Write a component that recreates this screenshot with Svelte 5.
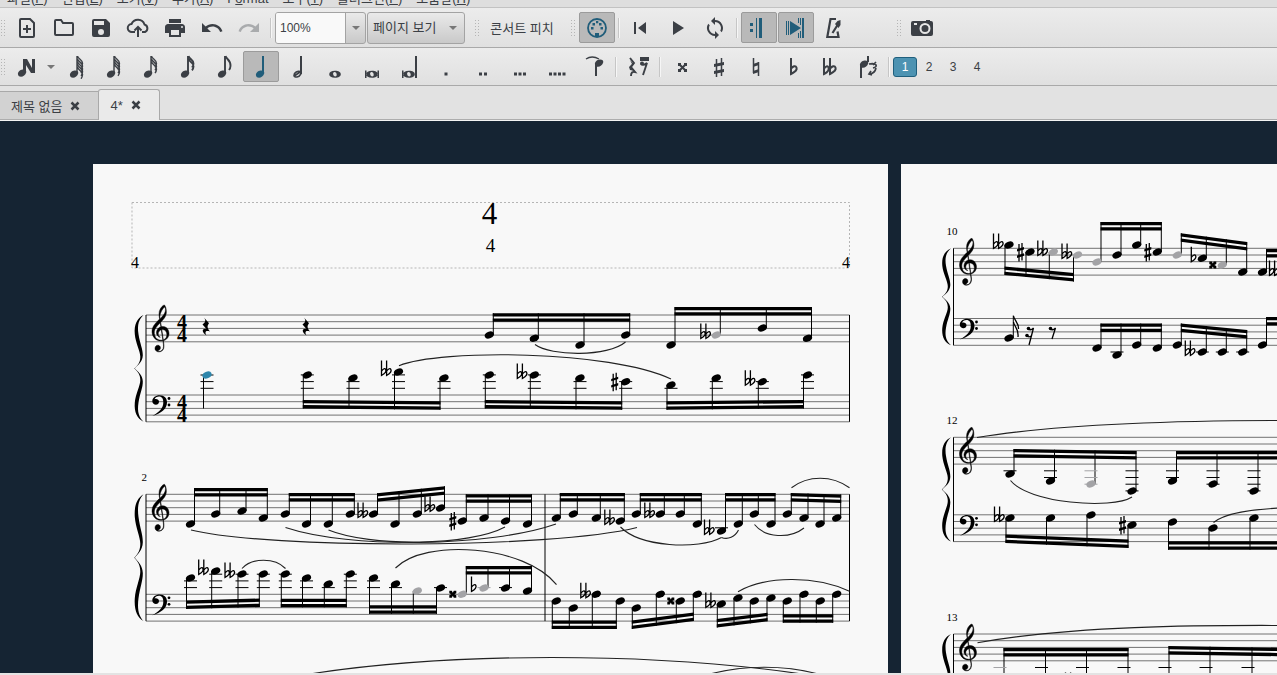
<script lang="ts">
type Icon = { fill?: string; line?: string; width?: number; solid?: boolean };
type Tool = { icon: string; label: string };
// x, y, accidental, muted
type Note = [number, number, string?, boolean?];
type Group = { dir: "up" | "down"; from: number; to: number; notes: Note[] };
type Staff = { clef: "treble" | "bass"; top: number; groups: Group[] };
type System = { x: number; end: number; label?: string; time?: boolean; bars?: number[]; staves: Staff[] };

const GAP = 6.7;

const menus = [
	["파일", "F"],
	["편집", "E"],
	["보기", "V"],
	["추가", "A"],
	["Format", ""],
	["도구", "T"],
	["플러그인", "P"],
	["도움말", "H"],
];

const head = (x: number, y: number) =>
	`M${x - 4} ${y + 1.6}c-.6-2.4 2-4.8 4.6-5 2.4-.2 4.2 1 3.6 3-.7 2.4-3 4.2-5.2 4.2-1.6 0-2.7-.8-3-2.2z`;

function flagged(count: number): Icon {
	let line = "M13 19V1";
	for (let i = 0; i < count; i++) {
		const y = 1 + i * 2.8;
		line += `M13.5 ${y}c.5 3 5.5 4.2 5 ${count === 1 ? 10 : 7.5}q-.2 2.5-1.5 4`;
	}
	return { fill: head(10, 19), line, width: count > 2 ? 1.4 : 1.9, solid: true };
}

const openHead =
	"M12 15.7c3.6 0 5.8 1.5 5.8 3.5s-2.2 3.5-5.8 3.5-5.8-1.5-5.8-3.5 2.2-3.5 5.8-3.5zM11.4 17c-1.6.3-1.6 1.9-.8 3.4.8 1.1 2 1.4 2.7.7 1-1.1.2-4.4-1.9-4.1z";

const icons: Record<string, Icon> = {
	create: { line: "M6 3h9l4 4v13a1 1 0 0 1-1 1H6a1 1 0 0 1-1-1V4a1 1 0 0 1 1-1zM12 9v8M8 13h8", width: 2 },
	open: { line: "M3 5a1 1 0 0 1 1-1h5l2 3h9a1 1 0 0 1 1 1v10a1 1 0 0 1-1 1H4a1 1 0 0 1-1-1z", width: 2 },
	save: { fill: "M17 3H5a2 2 0 0 0-2 2v14a2 2 0 0 0 2 2h14a2 2 0 0 0 2-2V7zM12 19a3 3 0 1 1 0-6 3 3 0 0 1 0 6zM15 9H5V5h10z" },
	cloud: { line: "M9 16H6a4 4 0 0 1-.5-8A7 7 0 0 1 18.5 8.5a4 4 0 0 1 .5 7.5h-3M12 21v-9M8.5 14.5 12 11l3.5 3.5", width: 2 },
	print: { fill: "M19 8H5c-1.66 0-3 1.34-3 3v6h4v4h12v-4h4v-6c0-1.66-1.34-3-3-3zm-3 11H8v-5h8v5zm3-7a1 1 0 1 1 0-2 1 1 0 0 1 0 2zM18 3H6v4h12z" },
	undo: { fill: "M12.5 8c-2.65 0-5.05.99-6.9 2.6L2 7v9h9l-3.62-3.62c1.39-1.16 3.16-1.88 5.12-1.88 3.54 0 6.55 2.31 7.6 5.5l2.37-.78C21.08 11.03 17.15 8 12.5 8z" },
	redo: { fill: "M18.4 10.6C16.55 8.99 14.15 8 11.5 8c-4.65 0-8.58 3.03-9.96 7.22L3.9 16c1.05-3.19 4.05-5.5 7.6-5.5 1.95 0 3.73.72 5.12 1.88L13 16h9V7z" },
	midi: {
		line: "M12 3a9 9 0 1 0 0 18 9 9 0 0 0 0-18z",
		fill: "M10 17h4v4h-4zM6 11h2.5v2.5H6zM15.5 11H18v2.5h-2.5zM7.5 7H10v2.5H7.5zM14 7h2.5v2.5H14zM11 5h2.3v2.3H11z",
		width: 1.8,
	},
	rewind: { fill: "M5 6h2v12H5zM17 6v12l-8-6z" },
	play: { fill: "M7 5v14l11-7z" },
	loop: { fill: "M12 4V1L8 5l4 4V6a6 6 0 0 1 5.3 8.8l1.46 1.46A8 8 0 0 0 12 4zM12 18a6 6 0 0 1-5.3-8.8L5.24 7.74A8 8 0 0 0 12 20v3l4-4-4-4z" },
	repeat: { fill: "M3 7h3v3H3zM3 13h3v3H3zM9 2h1v20H9zM12 2h3v20h-3z" },
	pan: { fill: "M2 5h1v14H2zM4 5h1v14H4zM6 5l11 7-11 7zM14 2h1v5h-1zM14 17h1v5h-1zM16 2h1v7h-1zM16 15h1v7h-1zM18 2h2v20h-2z", solid: true },
	metronome: { line: "M15 3H9.5L6.3 21h11.2L16.5 15.5M11.5 17l6-9.5", fill: "M14 8l2.5-3 3-1v5l-2 3z", width: 2.2 },
	camera: { fill: "M3 5h13V4h4v1h1a2 2 0 0 1 2 2v11a2 2 0 0 1-2 2H3a2 2 0 0 1-2-2V7a2 2 0 0 1 2-2zM15 7a5.5 5.5 0 1 0 0 11 5.5 5.5 0 0 0 0-11zM15 9a3.5 3.5 0 1 1 0 7 3.5 3.5 0 0 1 0-7zM4 7v2h3V7z" },
	input: { fill: head(8, 18) + "M9 4h4l5 9V4h3v14h-4l-5-8v8H9z", solid: true },
	n128: flagged(5),
	n64: flagged(4),
	n32: flagged(3),
	n16: flagged(2),
	n8: flagged(1),
	quarter: { fill: head(11, 19) + "M13 1h2v18h-2z", solid: true },
	half: { fill: "M14 1h2v18h-2z", line: "M8 20.5c0-3 4-5 6-4s.5 5-3 5.5c-1.5 0-3-.5-3-1.5zM9 20.5l5-3.5", width: 1.6 },
	whole: { fill: openHead },
	breve: { fill: openHead + "M5 15.5h1.5v7.5H5zM17.5 15.5H19v7.5h-1.5z" },
	longa: { fill: openHead + "M5 15.5h1.5v7.5H5zM18 1h2v22h-2z" },
	dot1: { fill: "M10.5 17.5h3v3h-3z" },
	dot2: { fill: "M8 17.5h3v3H8zM13 17.5h3v3h-3z" },
	dot3: { fill: "M6 17.5h3v3H6zM10.5 17.5h3v3h-3zM15 17.5h3v3h-3z" },
	dot4: { fill: "M4 17.5h3v3H4zM8.5 17.5h3v3h-3zM13 17.5h3v3h-3zM17.500 17.5h3v3h-3z" },
	tie: { line: "M4 4q6-4 13 0", fill: head(17, 8) + "M13 8h2v13h-2z", width: 1.4, solid: true },
	rest: {
		line: "M4 3l4 5-3 4 4 5q-4-1-4 4M14 5h9M15 9q3 2 6-1l-4 12",
		fill: "M4 5l4 4-3 3 4 4-5-1-1-3 3-3zM14 2h9v3h-9zM14 8.5a2 2 0 1 0 4 0 2 2 0 0 0-4 0z",
		width: 1.9,
		solid: true,
	},
	dsharp: { line: "M9 9l7 7M16 9l-7 7", fill: "M8 8h3v3H8zM14 8h3v3h-3zM8 14h3v3H8zM14 14h3v3h-3z", width: 2, solid: true },
	sharp: { line: "M9.5 4v18M14.5 3v18", fill: "M7 9l10-2v3L7 12zM7 16l10-2v3L7 19z", width: 1.5, solid: true },
	natural: { line: "M9.5 3v15M14.5 7v14", fill: "M9 9l6-2v3l-6 2zM9 16l6-2v3l-6 2z", width: 1.5, solid: true },
	flat: { line: "M10 3v16c4-2 6.5-4 5.5-6.5s-3.5-1-5.5 1", width: 2 },
	dflat: { line: "M6 3v16c4-2 5.5-4 4.5-6.5s-2.5-1-4.5 1M12 3v16c4-2 6.5-4 5.5-6.5s-3.5-1-5.5 1", width: 2 },
	flip: { fill: head(9, 9) + "M5 9h2v14H5zM12 1h2v6h-2z", line: "M14 9q6-1 7 1t-3 3M17 20l-3-1 2-3M21 7l-3 3M15 19q5-1 6-6", width: 1.7, solid: true },
};

const fileTools: Tool[] = [
	{ icon: "create", label: "새로 만들기" },
	{ icon: "open", label: "열기" },
	{ icon: "save", label: "저장" },
	{ icon: "cloud", label: "온라인 저장" },
	{ icon: "print", label: "인쇄" },
	{ icon: "undo", label: "실행 취소" },
	{ icon: "redo", label: "다시 실행" },
];

const playTools: Tool[] = [
	{ icon: "rewind", label: "처음으로" },
	{ icon: "play", label: "재생" },
	{ icon: "loop", label: "반복 재생" },
];

const durations: Tool[] = [
	{ icon: "n128", label: "128분음표" },
	{ icon: "n64", label: "64분음표" },
	{ icon: "n32", label: "32분음표" },
	{ icon: "n16", label: "16분음표" },
	{ icon: "n8", label: "8분음표" },
	{ icon: "quarter", label: "4분음표" },
	{ icon: "half", label: "2분음표" },
	{ icon: "whole", label: "온음표" },
	{ icon: "breve", label: "겹온음표" },
	{ icon: "longa", label: "롱가" },
	{ icon: "dot1", label: "점" },
	{ icon: "dot2", label: "겹점" },
	{ icon: "dot3", label: "세겹점" },
	{ icon: "dot4", label: "네겹점" },
	{ icon: "tie", label: "붙임줄" },
];

const accidentals: Tool[] = [
	{ icon: "dsharp", label: "겹올림표" },
	{ icon: "sharp", label: "올림표" },
	{ icon: "natural", label: "제자리표" },
	{ icon: "flat", label: "내림표" },
	{ icon: "dflat", label: "겹내림표" },
	{ icon: "flip", label: "방향 전환" },
];

let duration = $state("quarter");
let voice = $state(1);
let zoomLevel = $state("100%");
let midi = $state(true);
let repeats = $state(true);
let pan = $state(true);
let activeTab = $state(1);
const tabs = ["제목 없음", "4*"];

const up = (from: number, to: number, ...notes: Note[]): Group => ({ dir: "up", from, to, notes });
const down = (from: number, to: number, ...notes: Note[]): Group => ({ dir: "down", from, to, notes });

const firstPage: System[] = [
	{
		x: 146,
		end: 849.5,
		time: true,
		staves: [
			{
				clef: "treble",
				top: 315,
				groups: [
					up(313.3, 313.3, [489.3, 335], [534.3, 338.3], [580, 345], [625.7, 335]),
					up(307, 307, [671, 345], [716.3, 335, "dflat", true], [762.3, 328], [807.5, 338.3]),
				],
			},
			{
				clef: "bass",
				top: 395,
				groups: [
					down(408.4, 409.8, [307.3, 375], [353, 378], [398.5, 372, "dflat"], [444, 378]),
					down(408.4, 409.8, [489.3, 375], [534.3, 375, "dflat"], [580, 378], [625.7, 381.7, "sharp"]),
					down(409.8, 408.4, [671, 385], [716.3, 378], [762.3, 381.7, "dflat"], [807.5, 375]),
				],
			},
		],
	},
	{
		x: 146,
		end: 849.5,
		label: "2",
		bars: [545],
		staves: [
			{
				clef: "treble",
				top: 494.3,
				groups: [
					up(488, 488, [190.5, 524], [215.7, 514], [242, 511], [263.3, 518]),
					up(493, 493, [285.3, 514], [306.5, 524], [328.3, 524], [350.3, 514]),
					up(493.3, 486.3, [373.5, 514, "dflat"], [395, 524], [417.3, 514], [440.5, 508, "dflat"]),
					up(494.3, 494.3, [462.3, 521, "sharp"], [484, 518], [505.5, 521], [527.5, 524]),
					up(493, 493, [556.3, 518], [573.3, 514], [596.3, 518], [620.3, 521, "dflat"]),
					up(493, 493, [636.3, 514], [660.3, 514, "dflat"], [680.3, 514], [697.3, 524]),
					up(493, 493, [721.5, 531, "dflat"], [738.3, 524], [754.3, 514], [771, 524]),
					up(493, 494.5, [787.3, 514], [804, 518], [820, 524], [836.7, 518]),
				],
			},
			{
				clef: "bass",
				top: 594.3,
				groups: [
					down(609, 607, [190.5, 578], [215.7, 571, "dflat"], [242, 574, "dflat"], [263.3, 574]),
					down(607.3, 607.3, [285.3, 574], [306.5, 578], [328.3, 584], [350.3, 574]),
					down(613.8, 613.8, [373.5, 578], [395.5, 584], [417.3, 591, "", true], [440.5, 588]),
					up(566, 566, [462.3, 594.3, "dsharp", true], [484, 588, "flat", true], [505.5, 588], [527.5, 591]),
					down(629, 629, [556.3, 601], [573.3, 608], [596.3, 594.3, "dflat"], [620.3, 601]),
					down(629, 621, [636.3, 608], [660.3, 594.3], [680.3, 601, "dsharp"], [697.3, 594.3]),
					down(627.5, 621.3, [721.3, 604, "dflat"], [738, 598], [754.3, 601], [771, 598]),
					down(622.7, 622.7, [787.3, 601], [804, 594.3], [820.3, 601], [836.7, 594.3]),
				],
			},
		],
	},
];

const firstSlurs = [
	"M535 344.5C551 356.5 608 357 625.5 342",
	"M399 365.7C440 349 610 350 671 379",
	"M191 530C270 549 550 549 637 527.5",
	"M285.5 527.5C350 549 490 547 556 524",
	"M328.5 530C370 547 470 546 505 527",
	"M242 568.5C252 557.5 275 557.5 285.5 568.5",
	"M395.5 568C425 538 525 545 556.5 584.7",
	"M620.5 527C640 547 698 550 721.5 537.5",
	"M721.5 537.5C728 540 735 537 738.5 530",
	"M754.5 524.5C765 538 790 539 804 528",
	"M791.5 487.7C808 475 832 475 849.5 487.7",
	"M738 591.7C765 576 815 575 849.5 591.3",
	"M310 674C450 652 650 652 802 674",
	"M710 674C745 665 785 665 818 674",
];

const secondPage: System[] = [
	{
		x: 953.5,
		end: 1696,
		label: "10",
		staves: [
			{
				clef: "treble",
				top: 248.3,
				groups: [
					down(275, 281.5, [1009, 245, "dflat"], [1030, 252, "sharp"], [1053.3, 252, "dflat", true], [1077.5, 255, "dflat", true]),
					up(222, 222, [1097, 262, "", true], [1117, 255], [1136.7, 245], [1157.3, 252, "sharp"]),
					up(233.3, 242, [1177.3, 255, "", true], [1202.3, 258.3, "flat"], [1222.3, 265, "dsharp", true], [1242.7, 272]),
					up(249, 249, [1262.5, 272], [1285, 272, "dflat"]),
				],
			},
			{
				clef: "bass",
				top: 318.5,
				groups: [
					up(323.5, 323.5, [1097, 348], [1117, 355], [1136.7, 345], [1157.3, 348]),
					up(323.5, 330, [1177.3, 345], [1202.3, 352, "dflat"], [1222.3, 352], [1242.7, 352]),
					up(317, 317, [1262.5, 345], [1285, 345]),
				],
			},
		],
	},
	{
		x: 953.5,
		end: 1696,
		label: "12",
		staves: [
			{
				clef: "treble",
				top: 437.3,
				groups: [
					up(449, 451, [1010, 474], [1050.5, 481], [1091, 484, "", true], [1132, 491]),
					up(451, 451, [1172.5, 481], [1213, 484], [1254, 491], [1295, 481]),
				],
			},
			{
				clef: "bass",
				top: 514.8,
				groups: [
					down(543, 548, [1010, 518, "dflat"], [1050.5, 518], [1091, 515], [1132, 525, "sharp"]),
					down(549.7, 549.7, [1172.5, 522], [1213, 528], [1254, 518], [1295, 522]),
				],
			},
		],
	},
	{
		x: 953.5,
		end: 1696,
		label: "13",
		staves: [
			{
				clef: "treble",
				top: 634,
				groups: [
					up(648, 648, [1000, 681, "", true], [1041.5, 684], [1082.5, 684, "dflat"], [1124, 688]),
					up(646, 648, [1165, 684], [1206, 688], [1248, 684], [1289, 684]),
				],
			},
			{ clef: "bass", top: 711.5, groups: [] },
		],
	},
];

const secondSlurs = [
	"M977 437.5C1070 422 1200 420.5 1290 420.5",
	"M1010.5 480.5C1028 503 1112 510 1132 497",
	"M1213.5 522.5C1225 513 1250 509 1290 507.5",
	"M977.5 642.7C1070 626 1200 625 1290 625.5",
];

function stemX(group: Group, note: Note) {
	return note[0] + (group.dir === "up" ? 4 : -4);
}

function beamY(group: Group, x: number) {
	const start = stemX(group, group.notes[0]);
	const stop = stemX(group, group.notes[group.notes.length - 1]);
	return group.from + ((group.to - group.from) * (x - start)) / (stop - start);
}

function beams(group: Group) {
	const a = stemX(group, group.notes[0]) - 0.5;
	const b = stemX(group, group.notes[group.notes.length - 1]) + 0.5;
	const sign = group.dir === "up" ? 1 : -1;
	return [0, 5.2]
		.map((o) => {
			const y1 = group.from + o * sign;
			const y2 = group.to + o * sign;
			return `M${a} ${y1}L${b} ${y2}v${3.3 * sign}L${a} ${y1 + 3.3 * sign}z`;
		})
		.join("");
}

function ledgers(staff: Staff, y: number) {
	const lines: number[] = [];
	for (let l = staff.top - GAP; l > y - 2; l -= GAP) lines.push(l);
	for (let l = staff.top + GAP * 5; l < y + 2; l += GAP) lines.push(l);
	return lines;
}

function signX(x: number, kind: string, onLedger: boolean) {
	return x - (onLedger ? 12.5 : 11) + (kind === "dflat" ? 0 : 1.5);
}
</script>

{#snippet glyph(name: string)}
	{@const icon = icons[name]}
	<svg class="icon" viewBox="0 0 24 24" aria-hidden="true">
		{#if icon.line}
			<path d={icon.line} fill="none" stroke="currentColor" stroke-width={icon.width} />
		{/if}
		{#if icon.fill}
			<path d={icon.fill} fill="currentColor" fill-rule={icon.solid ? "nonzero" : "evenodd"} />
		{/if}
	</svg>
{/snippet}

{#snippet accidental(kind: string, x: number, y: number)}
	<g transform="translate({x} {y})">
		{#if kind === "dflat"}
			<path class="flat" d="M-4.5-11.5V3.5C-1 1.5.6-.8-.4-2.6S-3.3-2.6-4.5-.8M.6-11.5V3.5C4.2 1.5 5.8-.8 4.8-2.6S1.8-2.6.6-.8" />
		{:else if kind === "flat"}
			<path class="flat" d="M-1.5-11.5V3.5C2.2 1.5 3.8-.8 2.8-2.6S-.3-2.6-1.5-.8" />
		{:else if kind === "sharp"}
			<path class="flat" d="M-1.5-8V9.5M1.5-9V8.5" />
			<path d="M-3.5-2.8L3.5-5v2.4L-3.5-.4zM-3.5 3.5L3.5 1.3v2.4L-3.5 5.9z" />
		{:else if kind === "dsharp"}
			<path d="M-3.5-3.5H-1l1 2 1-2h2.5V-1l-2 1 2 1v2.5H1l-1-2-1 2h-2.5V1l2-1-2-1z" />
		{/if}
	</g>
{/snippet}

{#snippet score(systems: System[], slurs: string[])}
	{#each systems as system}
		{@const top = system.staves[0].top}
		{@const bottom = system.staves[1].top + GAP * 4}
		<path
			transform="translate({system.x - 12} {top}) scale(1 {(bottom - top) / 100})"
			d="M9.5 0C5 4 3 9 4.5 18C6 27 9 32 8.8 38C8.5 44 4 47 .8 50C4 53 8.5 56 8.8 62C9 68 6 73 4.5 82C3 91 5 96 9.5 100C3 97 0 91 .8 82C1.5 74 6.3 66 6.3 61C6.3 56 4 53 .3 50C4 47 6.3 44 6.3 39C6.3 34 1.5 26 .8 18C0 9 3 3 9.5 0z"
		/>
		{#if system.label}
			<text class="measure" x={system.x + (system.label.length > 1 ? 4 : 1)} y={top - 13}>{system.label}</text>
		{/if}
		<path class="bar" d="M{system.x} {top}V{bottom}M{system.end} {top}V{bottom}" />
		{#each system.bars ?? [] as bar}
			<path class="bar" d="M{bar} {top}V{bottom}" />
		{/each}
		{#each system.staves as staff}
			{#each [0, 1, 2, 3, 4] as line}
				<path class="staff" d="M{system.x} {staff.top + line * GAP}H{system.end}" />
			{/each}
			{#if staff.clef === "treble"}
				<path
					class="clef"
					transform="translate({system.x + 6} {staff.top - 10}) scale(1.12 1.15)"
					d="m12.049 3.53c.305 3.126-2.019 5.656-4.077 7.701-.935.897-.155.148-.644.594-.102-.479-.299-1.731-.28-2.11.13-2.694 2.32-6.588 4.238-8.024.309.577.563.623.763 1.839zm.651 16.142c-1.232-.906-2.85-1.144-4.334-.885-.191-1.255-.383-2.51-.574-3.764 2.351-2.329 4.907-5.032 5.041-8.539.059-2.232-.276-4.671-1.678-6.484-1.7.128-2.9 2.156-3.802 3.417-1.489 2.671-1.141 5.917-.57 8.797-.809.952-1.93 1.743-2.727 2.734-2.356 2.308-4.409 5.43-4.005 8.878.183 3.334 2.589 6.434 5.87 7.227 1.246.315 2.564.346 3.824.099.22 2.25 1.027 4.629.093 6.813-.701 1.598-2.788 3.004-4.333 2.192l-.478-.252c1.07-.257 2-1.036 2.26-1.565.838-1.464-.4-3.639-2.155-3.358-2.262.046-3.19 3.14-1.736 4.685 1.347 1.52 3.833 1.312 5.43.318 1.813-1.18 2.04-3.544 1.833-5.562-.07-.678-.403-2.67-.444-3.387l1.193-.449c2.66-1.053 4.357-4.259 3.594-7.122-.318-1.469-1.044-2.914-2.302-3.792zm.561 5.757c.214 1.991-1.053 4.321-3.079 4.96-.136-.795-.172-1.011-.263-1.475-.482-2.46-.744-4.987-1.116-7.481 1.625-.168 3.458.543 4.023 2.184.244.577.343 1.197.435 1.812zm-5.149 5.196c-2.544.141-5-1.595-5.634-4.081-.749-2.153-.528-4.63.821-6.504 1.115-1.702 2.607-3.105 4.029-4.543l.549 3.382c-2.991.782-5.005 4.725-3.215 7.451.532.764 1.977 2.223 2.766 1.634-1.102-.683-2.003-1.859-1.81-3.227-.082-1.282 1.37-2.911 2.651-3.198l1.38 8.943c-.505.1-1.021.143-1.537.143z"
				/>
			{:else}
				<g transform="translate({system.x + 6} {staff.top})">
					<path d="M.3 6C.3 2.5 4 .2 7.5.2c5 0 7.5 3 7.5 7.3C15 14 9 18.5.3 21c6.2-3.5 11-7.5 11-13.5C11.3 3.6 10 1.4 7 1.4c-2.3 0-4 1.2-4.5 2.8 1.7-.8 4.5 0 4.5 2.6 0 4.2-6.7 4-6.7-.8z" />
					<circle cx="17" cy="3.5" r="1.4" />
					<circle cx="17" cy="10" r="1.4" />
				</g>
			{/if}
			{#if system.time}
				<text class="time" x="182" y={staff.top + 14}>4</text>
				<text class="time" x="182" y={staff.top + 27}>4</text>
			{/if}
			{#each staff.groups as group}
				<path d={beams(group)} />
				{#each group.notes as note}
					{@const [x, y, sign, muted] = note}
					{@const sx = stemX(group, note)}
					{@const extra = ledgers(staff, y)}
					<path class="stem" d="M{sx} {y}V{beamY(group, sx)}" />
					{#each extra as line}
						<path class="ledger" class:muted d="M{x - 6.5} {line}h13" />
					{/each}
					<ellipse class:muted rx="4.8" ry="3.3" transform="translate({x} {y}) rotate(-24)" />
					{#if sign}
						{@render accidental(sign, signX(x, sign, extra.length > 0), y)}
					{/if}
				{/each}
			{/each}
		{/each}
	{/each}
	{#each slurs as slur}
		<path class="slur" d={slur} />
	{/each}
{/snippet}

<div class="app">
	<nav class="menubar">
		{#each menus as [name, key]}
			<a href="#{name}">{#if key}{name}(<u>{key}</u>){:else}F<u>o</u>rmat{/if}</a>
		{/each}
	</nav>

	<div class="toolbar">
		<i class="grip"></i>
		<div class="tools first">
			{#each fileTools as tool}
				<button class="tool" aria-label={tool.label} disabled={tool.icon === "redo"}>{@render glyph(tool.icon)}</button>
			{/each}
		</div>
		<i class="divider"></i>
		<div class="combo">
			<input aria-label="확대/축소" bind:value={zoomLevel} />
			<button aria-label="배율 목록"><i class="arrow"></i></button>
		</div>
		<div class="picker">
			<select aria-label="보기 방식">
				<option>페이지 보기</option>
				<option>연속 보기</option>
			</select>
			<i class="arrow"></i>
		</div>
		<i class="grip spaced"></i>
		<button class="pitch">콘서트 피치</button>
		<i class="grip spaced"></i>
		<button class="tool" class:on={midi} aria-label="MIDI 입력" onclick={() => (midi = !midi)}>{@render glyph("midi")}</button>
		<i class="divider"></i>
		<div class="tools">
			{#each playTools as tool}
				<button class="tool" aria-label={tool.label}>{@render glyph(tool.icon)}</button>
			{/each}
		</div>
		<i class="divider"></i>
		<div class="tools">
			<button class="tool" class:on={repeats} aria-label="도돌이표 재생" onclick={() => (repeats = !repeats)}>{@render glyph("repeat")}</button>
			<button class="tool" class:on={pan} aria-label="악보 따라가기" onclick={() => (pan = !pan)}>{@render glyph("pan")}</button>
			<button class="tool" aria-label="메트로놈">{@render glyph("metronome")}</button>
		</div>
		<i class="grip far"></i>
		<button class="tool" aria-label="이미지 캡처">{@render glyph("camera")}</button>
	</div>

	<div class="toolbar notes">
		<i class="grip"></i>
		<button class="tool entry" aria-label="음표 입력">{@render glyph("input")}</button>
		<button class="more" aria-label="입력 방식"><i class="arrow"></i></button>
		<div class="tools">
			{#each durations as tool}
				<button class="tool" class:on={duration === tool.icon} aria-label={tool.label} onclick={() => (duration = tool.icon)}>{@render glyph(tool.icon)}</button>
			{/each}
		</div>
		<i class="divider"></i>
		<button class="tool" aria-label="쉼표">{@render glyph("rest")}</button>
		<i class="divider"></i>
		<div class="tools">
			{#each accidentals as tool}
				<button class="tool" aria-label={tool.label}>{@render glyph(tool.icon)}</button>
			{/each}
		</div>
		<i class="divider"></i>
		{#each [1, 2, 3, 4] as n}
			<button class="voice" class:current={voice === n} onclick={() => (voice = n)}>{n}</button>
		{/each}
	</div>

	<div class="tabs">
		{#each tabs as tab, index}
			<div class="tab" class:active={activeTab === index}>
				<button class="name" onclick={() => (activeTab = index)}>{tab}</button>
				<button class="close" aria-label="{tab} 닫기">
					<svg viewBox="0 0 10 10" aria-hidden="true"><path d="M1.5 1.5l7 7M8.5 1.5l-7 7" /></svg>
				</button>
			</div>
		{/each}
	</div>

	<main class="canvas">
		<svg class="page" viewBox="93 164 795 1124">
			<rect class="frame" x="132" y="202.5" width="717.5" height="65.5" />
			<text class="title" x="489.5" y="224">4</text>
			<text class="subtitle" x="490.5" y="252">4</text>
			<text class="credit" x="131" y="268">4</text>
			<text class="credit" x="850" y="268" text-anchor="end">4</text>
			{@render score(firstPage, firstSlurs)}
			{#each [206, 306] as x}
				<path transform="translate({x} 326)" d="M-2.5-9l5.5 6.3C1 0 1 2 4 5.5-.5 4-1.5 6 .5 9.5-4.5 6.5-4.5 2 .5 3L-3.5-1.5C0-4 0-6-2.5-9z" />
			{/each}
			<path class="stem" d="M203.5 376V408.5" />
			<path class="ledger" d="M200.5 375h13M200.5 381.6h13M200.5 388.3h13" />
			<ellipse class="selected" rx="4.8" ry="3.3" transform="translate(207 375) rotate(-24)" />
		</svg>
		<svg class="page" viewBox="901 164 795 1124">
			{@render score(secondPage, secondSlurs)}
			<path class="stem" d="M1013.3 338V315.5" />
			<path class="hook" d="M1013.5 316c.5 4 5.5 7 5 13M1013.5 322c.5 4 5.5 7 4.5 15" />
			<ellipse rx="4.8" ry="3.3" transform="translate(1009 338) rotate(-24)" />
			<path class="hook" d="M1028 329q3 2 5.5-1l-4.5 17M1027 336q3 2 5-1" />
			<path class="hook" d="M1050 329q3 2 5.5-1l-3.5 11" />
			<circle cx="1028.5" cy="328.5" r="1.8" />
			<circle cx="1027" cy="335.5" r="1.8" />
			<circle cx="1050.5" cy="328.5" r="1.8" />
		</svg>
	</main>
</div>

<style>
	:global(body) {
		background: #e3e3e3;
	}

	.app {
		display: flex;
		flex-direction: column;
		height: 100vh;
		overflow: hidden;
		color: #3b3f45;
		font-family: "Liberation Sans", "Noto Sans CJK KR", sans-serif;
		font-size: 13px;
	}

	button,
	input,
	select {
		box-sizing: border-box;
		margin: 0;
		padding: 0;
		border: none;
		background: none;
		color: inherit;
		font: inherit;
	}

	.menubar {
		display: flex;
		flex: none;
		align-items: flex-end;
		gap: 14px;
		height: 7px;
		padding-left: 7px;
		overflow: hidden;
		border-bottom: 1px solid #c2c2c2;
		background: #dedede;
		line-height: 16px;
	}

	.menubar a {
		color: inherit;
		text-decoration: none;
		white-space: nowrap;
	}

	.toolbar {
		display: flex;
		flex: none;
		align-items: center;
		height: 39px;
		border-bottom: 1px solid #a9a9a9;
		background: linear-gradient(#ececec, #e0e0e0);
	}

	.toolbar.notes {
		height: 37px;
	}

	.tools {
		display: flex;
		gap: 1px;
	}

	.tools.first {
		margin-left: 4px;
	}

	.grip {
		flex: none;
		width: 5px;
		height: 18px;
		background: radial-gradient(circle, #b5b5b5 34%, transparent 40%) 0 0 / 3px 3px;
	}

	.grip.spaced {
		margin: 0 4px 0 9px;
	}

	.grip.far {
		margin: 0 3px 0 45px;
	}

	.divider {
		flex: none;
		width: 1px;
		height: 20px;
		margin: 0 3px;
		border-right: 1px solid #f6f6f6;
		background: #c6c6c6;
	}

	.tool {
		display: flex;
		flex: none;
		align-items: center;
		justify-content: center;
		width: 36px;
		height: 31px;
		border: 1px solid transparent;
		border-radius: 2px;
	}

	.tool.on {
		border-color: #9b9b9b;
		background: #b9b9b9;
		color: #205d7a;
	}

	.tool:disabled {
		color: #a9abad;
	}

	.icon {
		width: 24px;
		height: 24px;
	}

	.combo,
	.picker {
		box-sizing: border-box;
		display: flex;
		flex: none;
		height: 32px;
		border: 1px solid #a3a3a3;
		border-radius: 3px;
		background: linear-gradient(#eaeaea, #c9c9c9);
	}

	.combo {
		width: 91px;
		margin-right: 1px;
	}

	.combo input {
		width: 70px;
		padding-left: 4px;
		border-right: 1px solid #a3a3a3;
		border-radius: 2px 0 0 2px;
		background: #f9f9f9;
		font-size: 12px;
	}

	.combo button {
		display: flex;
		flex: 1;
		align-items: center;
		justify-content: center;
	}

	.picker {
		position: relative;
		width: 98px;
	}

	.picker select {
		width: 100%;
		padding-left: 5px;
		appearance: none;
	}

	.arrow {
		width: 0;
		border: 4px solid transparent;
		border-top-color: #777;
		border-bottom: none;
	}

	.picker .arrow {
		position: absolute;
		top: 13px;
		right: 7px;
		pointer-events: none;
	}

	.pitch {
		width: 78px;
	}

	.entry {
		margin-left: 3px;
	}

	.more {
		width: 14px;
		height: 31px;
	}

	.more .arrow {
		display: block;
		margin: auto;
	}

	.voice {
		width: 24px;
		height: 20px;
		border: 1px solid transparent;
		border-radius: 3px;
		font-size: 12px;
	}

	.voice.current {
		border-color: #1f5f7d;
		background: #4d93b2;
		color: #fff;
	}

	.tabs {
		display: flex;
		flex: none;
		align-items: flex-end;
		height: 34px;
		border-bottom: 1px solid #f4f4f4;
		background: #e2e2e2;
		box-shadow: inset 0 -1px #adadad;
	}

	.tab {
		display: flex;
		box-sizing: border-box;
		align-items: center;
		gap: 8px;
		height: 29px;
		padding: 0 18px 0 11px;
		border-top: 1px solid #a9a9a9;
		border-bottom: 1px solid #adadad;
		background: #d2d2d2;
	}

	.tab.active {
		height: 31px;
		border: 1px solid #a9a9a9;
		border-bottom: none;
		border-radius: 3px 3px 0 0;
		background: #eaeaea;
	}

	.name {
		white-space: nowrap;
	}

	.close {
		width: 10px;
		height: 10px;
	}

	.close svg {
		display: block;
	}

	.close path {
		stroke: currentColor;
		stroke-width: 2.5;
	}

	.canvas {
		display: flex;
		flex: 1;
		align-items: flex-start;
		gap: 13px;
		min-height: 0;
		margin-bottom: 2px;
		padding: 43px 0 0 93px;
		box-sizing: border-box;
		overflow: hidden;
		background: #152433;
	}

	.page {
		flex: none;
		width: 795px;
		background: #f8f8f8;
		font-family: "Liberation Serif", serif;
	}

	.frame {
		fill: none;
		stroke: #b5b5b5;
		stroke-dasharray: 2 2;
	}

	.title,
	.subtitle,
	.time {
		text-anchor: middle;
	}

	.title {
		font-size: 31px;
	}

	.subtitle {
		font-size: 19px;
	}

	.credit {
		font-size: 16px;
	}

	.measure {
		font-size: 11px;
		text-anchor: end;
	}

	.time {
		font-size: 20px;
		font-weight: bold;
	}

	.staff {
		stroke: #000;
		stroke-width: 0.55;
	}

	.clef {
		stroke: #000;
		stroke-width: 0.4;
	}

	.bar,
	.stem,
	.ledger {
		stroke: #000;
		stroke-width: 1;
	}

	.flat,
	.hook {
		fill: none;
		stroke: #000;
		stroke-width: 1.3;
	}

	.slur {
		fill: none;
		stroke: #222;
		stroke-width: 1.1;
	}

	ellipse.muted {
		fill: #a3a3a6;
	}

	.ledger.muted {
		stroke: #a3a3a6;
	}

	.selected {
		fill: #2e86ab;
	}
</style>
